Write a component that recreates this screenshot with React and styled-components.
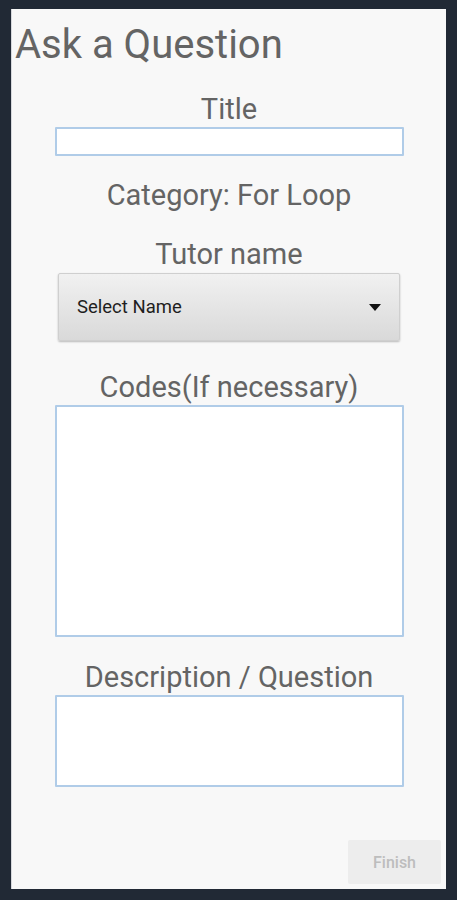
import styled, { createGlobalStyle } from "styled-components";

const GlobalStyle = createGlobalStyle`
  html, body {
    margin: 0;
    padding: 0;
    background: #212935;
  }
  body {
    font-family: Roboto, "Liberation Sans", sans-serif;
  }
`;

const Screen = styled.div`
  box-sizing: border-box;
  height: 900px;
  padding: 9px 11px 11px 11px;
  display: flex;
`;

const Panel = styled.div`
  flex: 1;
  background: #f8f8f8;
  border-left: 1px solid #d6d8dc;
  display: flex;
  flex-direction: column;
  align-items: center;
`;

const Heading = styled.h1`
  align-self: flex-start;
  margin: 12px 0 0 3px;
  font-size: 40px;
  line-height: 48px;
  font-weight: 400;
  color: #646464;
`;

const Label = styled.div`
  font-size: 29px;
  line-height: 34px;
  color: #646464;
  margin-top: ${(p) => p.top}px;
  margin-bottom: 1px;
`;

const Field = styled.div`
  box-sizing: border-box;
  width: 349px;
  height: ${(p) => p.h}px;
  background: #ffffff;
  border: 2px solid #b0cce8;
  border-radius: 1px;
`;

const Select = styled.div`
  box-sizing: border-box;
  width: 342px;
  height: 68px;
  margin-top: 1px;
  padding: 0 18px 0 18px;
  display: flex;
  align-items: center;
  justify-content: space-between;
  background: linear-gradient(#f1f1f1, #d9d9d9);
  border: 1px solid #cfcfcf;
  border-radius: 2px;
  box-shadow: 0 1px 2px rgba(0, 0, 0, 0.25);
  font-size: 18.5px;
  color: #1e1e1e;
`;

const Spacer = styled.div`
  flex: 1;
`;

const Finish = styled.div`
  align-self: flex-end;
  margin: 0 5px 5px 0;
  width: 93px;
  height: 44px;
  display: flex;
  align-items: center;
  justify-content: center;
  background: #ededed;
  border-radius: 2px;
  font-size: 16px;
  font-weight: 500;
  color: #bdbdbd;
`;

export default function App() {
  return (
    <>
      <GlobalStyle />
      <Screen>
        <Panel>
          <Heading>Ask a Question</Heading>
          <Label top={23}>Title</Label>
          <Field h={29} />
          <Label top={22}>Category: For Loop</Label>
          <Label top={24}>Tutor name</Label>
          <Select>
            <span>Select Name</span>
            <svg width="12" height="7" viewBox="0 0 12 7">
              <path d="M0 0h12L6 7z" fill="#111" />
            </svg>
          </Select>
          <Label top={29}>Codes(If necessary)</Label>
          <Field h={232} />
          <Label top={23}>Description / Question</Label>
          <Field h={92} />
          <Spacer />
          <Finish>Finish</Finish>
        </Panel>
      </Screen>
    </>
  );
}
